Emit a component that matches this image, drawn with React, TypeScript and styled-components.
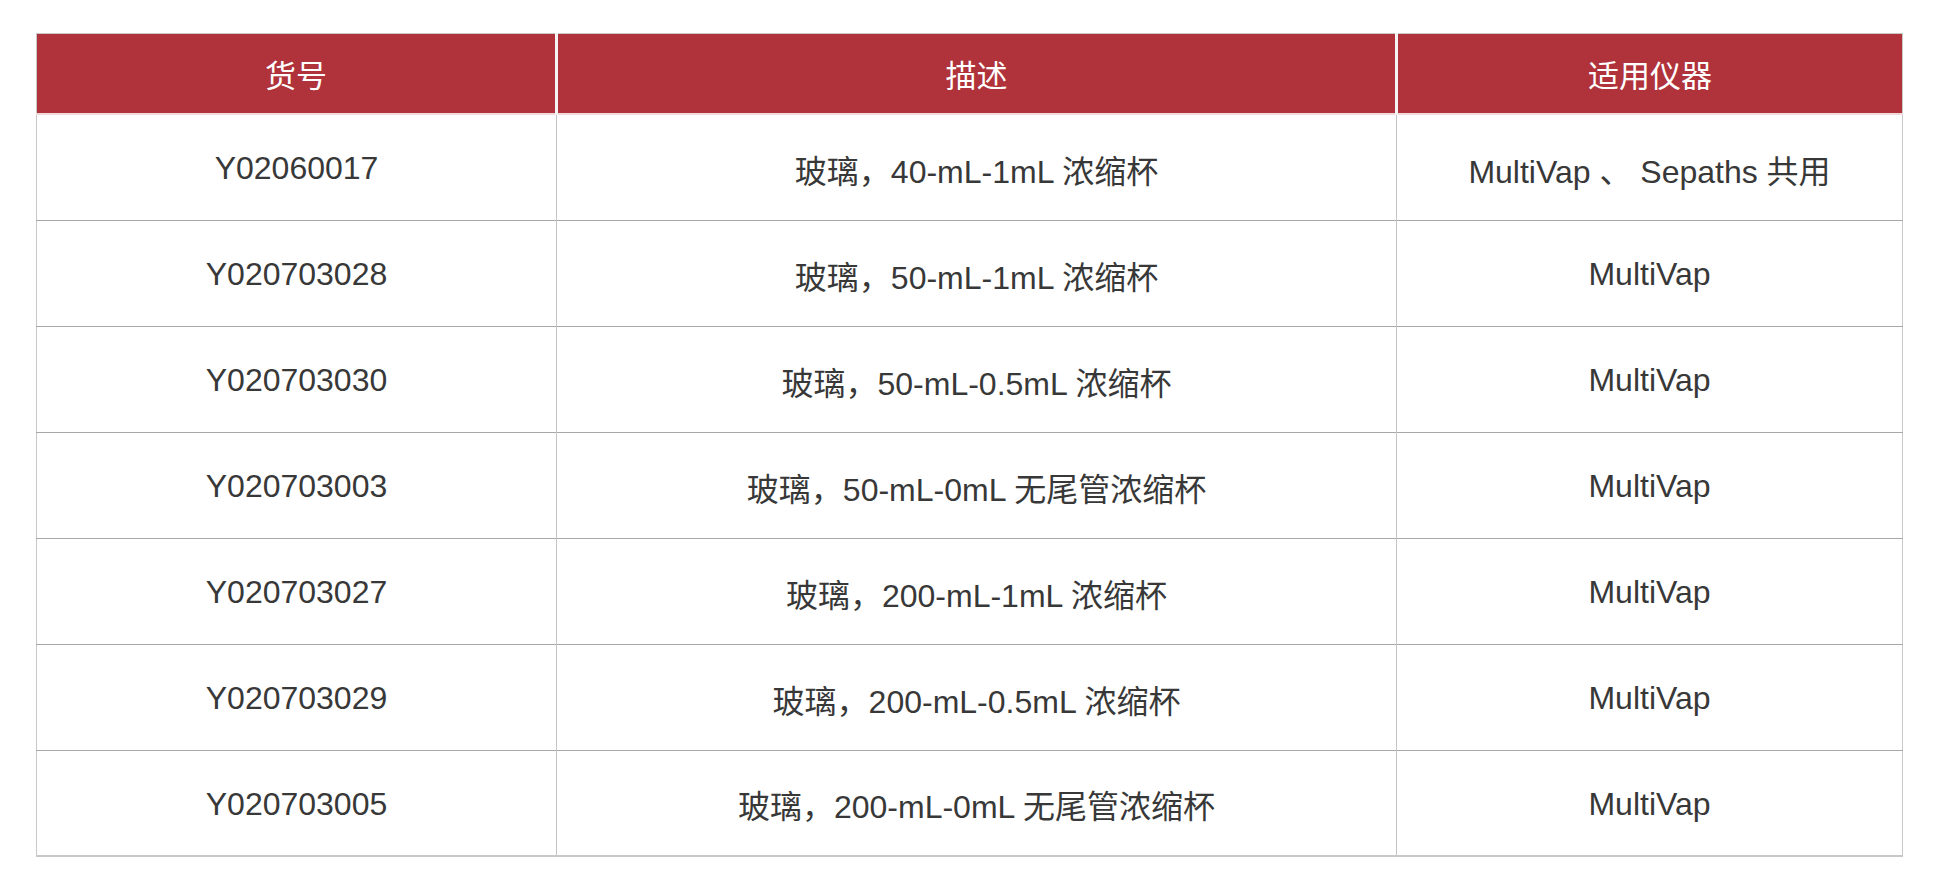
import React from 'react';
import styled, { createGlobalStyle } from 'styled-components';

const GlobalStyle = createGlobalStyle`
  html, body {
    margin: 0;
    padding: 0;
    background: #ffffff;
  }
  body {
    font-family: "Liberation Sans", Arial, "Noto Sans CJK SC", sans-serif;
  }
`;

const Page = styled.div`
  padding: 33px 45px 0 36px;
`;

const Table = styled.table`
  width: 1859px;
  border-collapse: collapse;
  table-layout: fixed;
  border: 1px solid #c8c8c8;
  border-bottom-width: 2px;
`;

const HeadCell = styled.th<{ $width: number }>`
  width: ${(p) => p.$width}px;
  height: 79px;
  background-color: #b0323a;
  color: #ffffff;
  font-weight: normal;
  font-size: 31px;
  text-align: center;
  vertical-align: middle;
  border-left: 3px solid #f4f4f4;
  border-bottom: 2px solid #f2dada;
  padding: 0;

  &:first-child {
    border-left: none;
  }
`;

const Row = styled.tr`
  height: 106px;
  border-top: 1px solid #a8a8a8;

  &:first-child {
    border-top: none;
  }
`;

const Cell = styled.td`
  color: #383838;
  font-size: 32px;
  text-align: center;
  vertical-align: middle;
  border-left: 1px solid #c4c4c4;
  padding: 3px 0 0;

  &:first-child {
    border-left: none;
  }
`;

const columns = [
  { title: '货号', width: 518 },
  { title: '描述', width: 837 },
  { title: '适用仪器', width: 504 },
];

const rows = [
  { code: 'Y02060017', desc: '玻璃，40-mL-1mL 浓缩杯', device: 'MultiVap 、 Sepaths 共用' },
  { code: 'Y020703028', desc: '玻璃，50-mL-1mL 浓缩杯', device: 'MultiVap' },
  { code: 'Y020703030', desc: '玻璃，50-mL-0.5mL 浓缩杯', device: 'MultiVap' },
  { code: 'Y020703003', desc: '玻璃，50-mL-0mL 无尾管浓缩杯', device: 'MultiVap' },
  { code: 'Y020703027', desc: '玻璃，200-mL-1mL 浓缩杯', device: 'MultiVap' },
  { code: 'Y020703029', desc: '玻璃，200-mL-0.5mL 浓缩杯', device: 'MultiVap' },
  { code: 'Y020703005', desc: '玻璃，200-mL-0mL 无尾管浓缩杯', device: 'MultiVap' },
];

export default function App() {
  return (
    <>
      <GlobalStyle />
      <Page>
        <Table>
          <thead>
            <tr>
              {columns.map((c) => (
                <HeadCell key={c.title} $width={c.width}>
                  {c.title}
                </HeadCell>
              ))}
            </tr>
          </thead>
          <tbody>
            {rows.map((r) => (
              <Row key={r.code}>
                <Cell>{r.code}</Cell>
                <Cell>{r.desc}</Cell>
                <Cell>{r.device}</Cell>
              </Row>
            ))}
          </tbody>
        </Table>
      </Page>
    </>
  );
}
